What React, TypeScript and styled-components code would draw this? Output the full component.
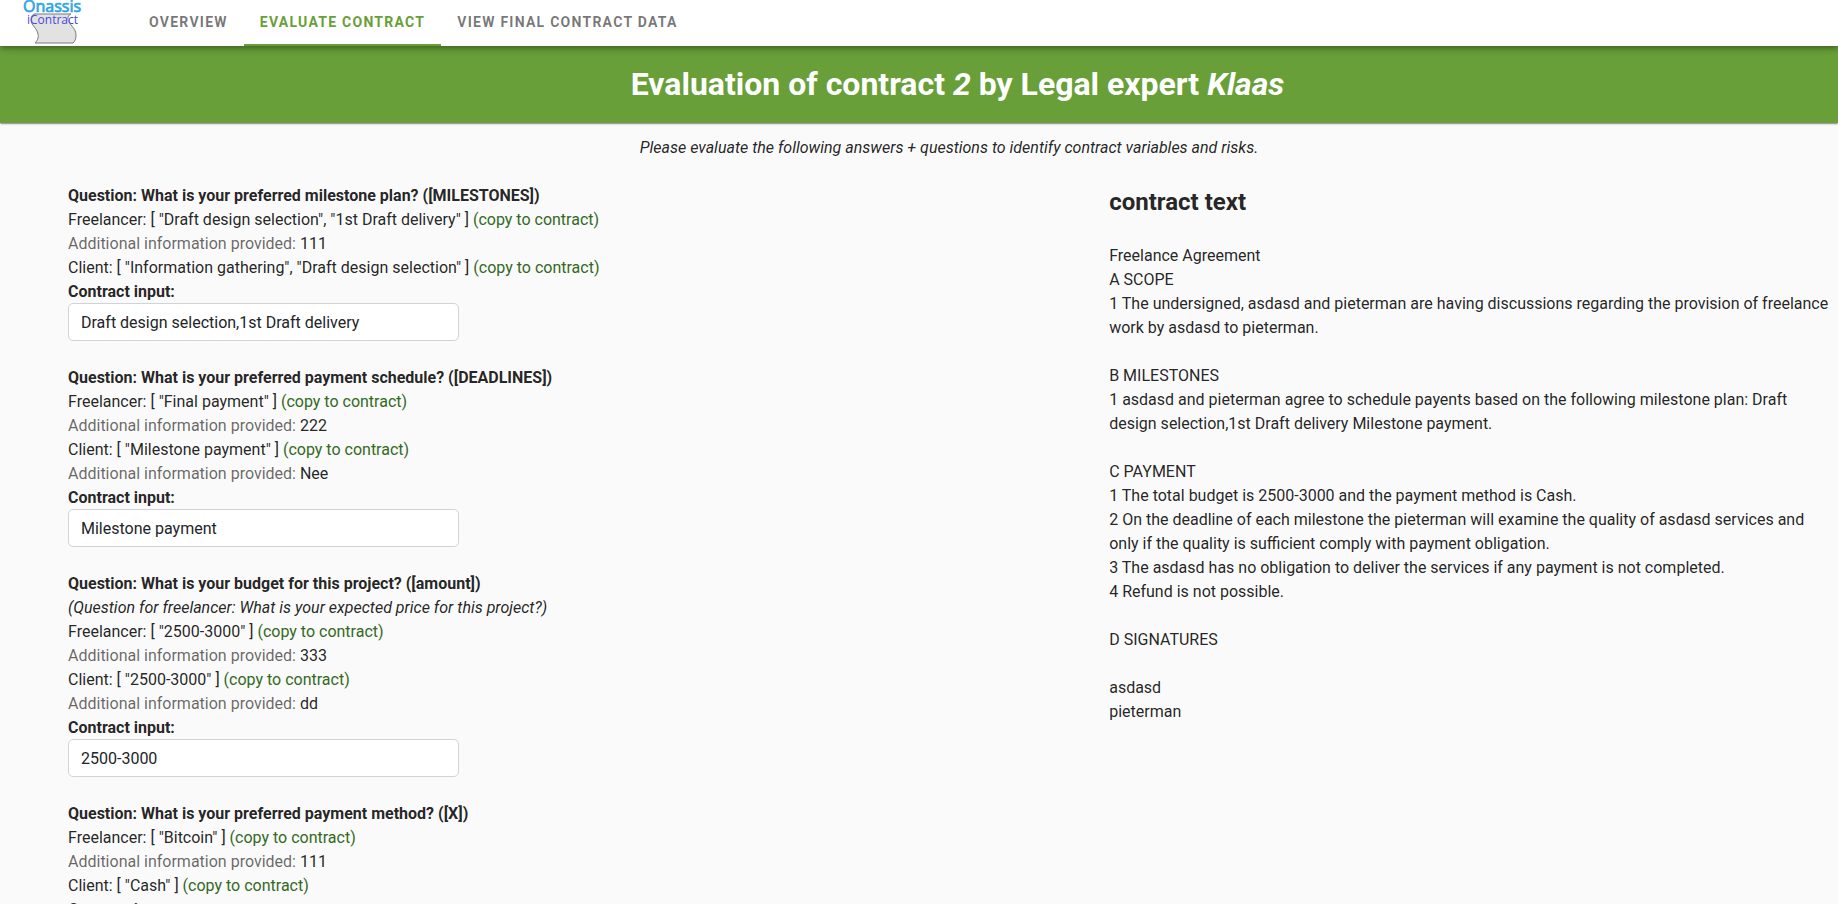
import React, { useId, useState } from "react";
import styled, { createGlobalStyle } from "styled-components";

const GlobalStyle = createGlobalStyle`
  *, *::before, *::after { box-sizing: border-box; }
  body {
    margin: 0;
    background: #fafafa;
    color: rgba(0, 0, 0, 0.87);
    font: 16px/24px Roboto, sans-serif;
  }
`;

const AppBar = styled.header`
  position: relative;
  z-index: 1;
  display: flex;
  height: 46px;
  padding-left: 22px;
  background: #fff;
  box-shadow: 0 2px 4px -1px rgba(0, 0, 0, 0.2), 0 4px 5px rgba(0, 0, 0, 0.14), 0 1px 10px rgba(0, 0, 0, 0.12);
`;

const LogoLink = styled.a`
  display: block;
  width: 60px;
  height: 46px;
  margin-right: 51px;
`;

const Tabs = styled.nav`
  display: flex;
`;

const Tab = styled.a<{ $active?: boolean }>`
  display: flex;
  align-items: center;
  padding: 0 16px;
  border-bottom: 2px solid ${(p) => (p.$active ? "#689f38" : "transparent")};
  color: ${(p) => (p.$active ? "#689f38" : "rgba(0, 0, 0, 0.54)")};
  font-size: 14px;
  font-weight: 700;
  letter-spacing: 0.09em;
  text-decoration: none;
  text-transform: uppercase;
`;

const Banner = styled.div`
  padding: 14px 0 15px 77px;
  background: #689f38;
  box-shadow: 0 2px 1px -1px rgba(0, 0, 0, 0.2), 0 1px 1px rgba(0, 0, 0, 0.14), 0 1px 3px rgba(0, 0, 0, 0.12);
  color: #fff;
  text-align: center;
`;

const Title = styled.h1`
  margin: 0;
  font-size: 32px;
  line-height: 48px;
  font-weight: 700;
`;

const Main = styled.main`
  padding: 13px 8px 24px 68px;
`;

const Intro = styled.p`
  margin: 0 0 24px;
  font-style: italic;
  text-align: center;
`;

const Columns = styled.div`
  display: grid;
  grid-template-columns: 13fr 9fr;
  align-items: start;
`;

const QuestionList = styled.div`
  display: grid;
  gap: 24px;
`;

const QuestionTitle = styled.h2`
  margin: 0;
  font-size: 16px;
  line-height: 24px;
  font-weight: 700;
`;

const Line = styled.p<{ $italic?: boolean }>`
  margin: 0;
  font-style: ${(p) => (p.$italic ? "italic" : "normal")};
`;

const Muted = styled.span`
  color: rgba(0, 0, 0, 0.6);
`;

const CopyButton = styled.button`
  padding: 0;
  border: 0;
  background: none;
  color: #33691e;
  font: inherit;
  cursor: pointer;
`;

const FieldLabel = styled.label`
  display: block;
  font-weight: 700;
`;

const Field = styled.input`
  display: block;
  width: 391px;
  max-width: 100%;
  height: 38px;
  margin: -1px 0 1px;
  padding: 6px 12px;
  border: 1px solid #ced4da;
  border-radius: 5px;
  background: #fff;
  color: #212529;
  font: inherit;
`;

const ContractTitle = styled.h2`
  margin: 0 0 24px;
  font-size: 24px;
  line-height: 36px;
  font-weight: 700;
`;

const ContractBody = styled.div`
  white-space: pre-line;
`;

interface Answer {
  role: string;
  values: string[];
  info?: string;
}

interface Question {
  text: string;
  variable: string;
  freelancerText?: string;
  answers: Answer[];
  input: string;
}

const questions: Question[] = [
  {
    text: "What is your preferred milestone plan?",
    variable: "MILESTONES",
    answers: [
      { role: "Freelancer", values: ["Draft design selection", "1st Draft delivery"], info: "111" },
      { role: "Client", values: ["Information gathering", "Draft design selection"] },
    ],
    input: "Draft design selection,1st Draft delivery",
  },
  {
    text: "What is your preferred payment schedule?",
    variable: "DEADLINES",
    answers: [
      { role: "Freelancer", values: ["Final payment"], info: "222" },
      { role: "Client", values: ["Milestone payment"], info: "Nee" },
    ],
    input: "Milestone payment",
  },
  {
    text: "What is your budget for this project?",
    variable: "amount",
    freelancerText: "What is your expected price for this project?",
    answers: [
      { role: "Freelancer", values: ["2500-3000"], info: "333" },
      { role: "Client", values: ["2500-3000"], info: "dd" },
    ],
    input: "2500-3000",
  },
  {
    text: "What is your preferred payment method?",
    variable: "X",
    answers: [
      { role: "Freelancer", values: ["Bitcoin"], info: "111" },
      { role: "Client", values: ["Cash"] },
    ],
    input: "Cash",
  },
];

const contractText = `Freelance Agreement
A SCOPE
1 The undersigned, asdasd and pieterman are having discussions regarding the provision of freelance work by asdasd to pieterman.

B MILESTONES
1 asdasd and pieterman agree to schedule payents based on the following milestone plan: Draft design selection,1st Draft delivery Milestone payment.

C PAYMENT
1 The total budget is 2500-3000 and the payment method is Cash.
2 On the deadline of each milestone the pieterman will examine the quality of asdasd services and only if the quality is sufficient comply with payment obligation.
3 The asdasd has no obligation to deliver the services if any payment is not completed.
4 Refund is not possible.

D SIGNATURES

asdasd
pieterman`;

function Logo() {
  return (
    <svg width="60" height="46" viewBox="0 0 60 46" role="img" aria-label="Onassis iContract">
      <defs>
        <linearGradient id="logo-blue" x1="0" y1="0" x2="0" y2="1">
          <stop offset="0" stopColor="#5cc8f5" />
          <stop offset="1" stopColor="#1487d4" />
        </linearGradient>
      </defs>
      <path
        d="M12 14H49C46 15 45 18 47 22C49 26 54 29 54 35C54 39 53 41 51 43H13C15 41 17 38 16 34C15 28 9 25 9 20C9 17 10 15 12 14Z"
        fill="#e2e2e2"
        stroke="#7a7a7a"
      />
      <text x="5" y="24" fontFamily="Open Sans, sans-serif" fontSize="12" fill="#4a4ae0">iContract</text>
      <text x="1" y="12" fontFamily="Open Sans, sans-serif" fontSize="16" fill="url(#logo-blue)" stroke="#2aa5e6" strokeWidth="0.7">Onassis</text>
    </svg>
  );
}

function QuestionBlock({ question }: { question: Question }) {
  const id = useId();
  const [value, setValue] = useState(question.input);
  return (
    <section>
      <QuestionTitle>{`Question: ${question.text} ([${question.variable}])`}</QuestionTitle>
      {question.freelancerText && (
        <Line $italic>{`(Question for freelancer: ${question.freelancerText})`}</Line>
      )}
      {question.answers.map((answer) => (
        <React.Fragment key={answer.role}>
          <Line>
            {`${answer.role}: [ ${answer.values.map((v) => `"${v}"`).join(", ")} ] `}
            <CopyButton type="button" onClick={() => setValue(answer.values.join(","))}>
              (copy to contract)
            </CopyButton>
          </Line>
          {answer.info && (
            <Line>
              <Muted>Additional information provided:</Muted> {answer.info}
            </Line>
          )}
        </React.Fragment>
      ))}
      <FieldLabel htmlFor={id}>Contract input:</FieldLabel>
      <Field id={id} type="text" value={value} onChange={(e) => setValue(e.target.value)} />
    </section>
  );
}

export default function App() {
  return (
    <>
      <GlobalStyle />
      <AppBar>
        <LogoLink href="#home">
          <Logo />
        </LogoLink>
        <Tabs>
          <Tab href="#overview">Overview</Tab>
          <Tab href="#evaluate" $active aria-current="page">Evaluate contract</Tab>
          <Tab href="#final">View final contract data</Tab>
        </Tabs>
      </AppBar>
      <Banner>
        <Title>
          Evaluation of contract <em>2</em> by Legal expert <em>Klaas</em>
        </Title>
      </Banner>
      <Main>
        <Intro>Please evaluate the following answers + questions to identify contract variables and risks.</Intro>
        <Columns>
          <QuestionList>
            {questions.map((question) => (
              <QuestionBlock key={question.variable} question={question} />
            ))}
          </QuestionList>
          <section>
            <ContractTitle>contract text</ContractTitle>
            <ContractBody>{contractText}</ContractBody>
          </section>
        </Columns>
      </Main>
    </>
  );
}
